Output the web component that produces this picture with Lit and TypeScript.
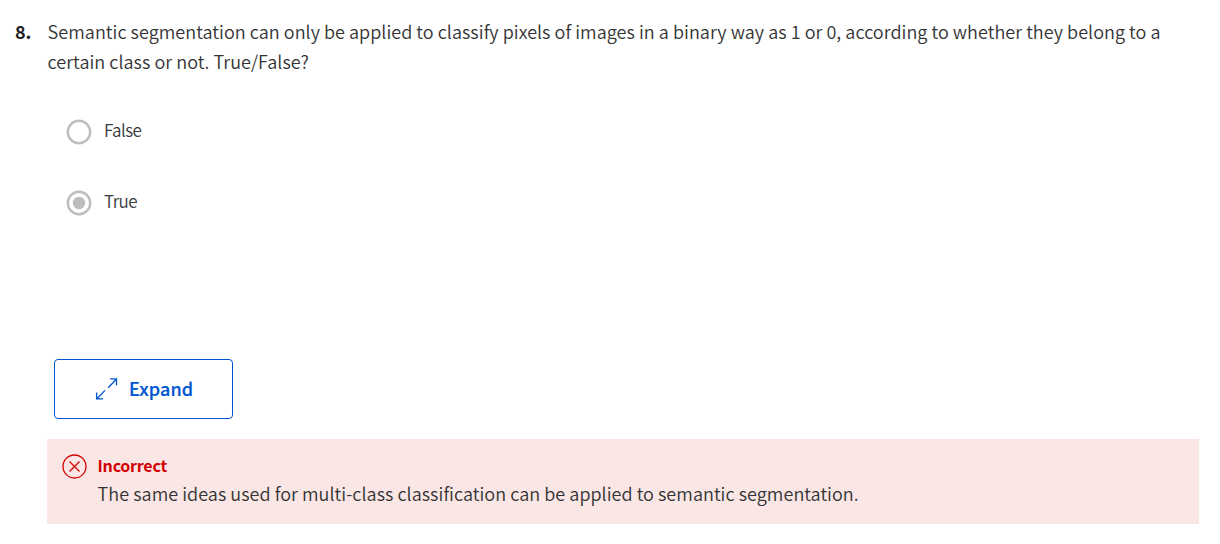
import { LitElement, html, css, svg } from "lit";
import { customElement, property } from "lit/decorators.js";

@customElement("quiz-option")
export class QuizOption extends LitElement {
  @property() label = "";
  @property({ type: Boolean }) checked = false;

  static styles = css`
    :host { display: flex; align-items: center; height: 26px; }
    .radio { display: block; width: 26px; height: 26px; margin-right: 12px; flex: none; }
    .label { font-size: 17px; line-height: 26px; letter-spacing: -0.55px; color: #373a3c; white-space: nowrap; margin-top: -4px; font-weight: 350; }
  `;

  render() {
    return html`
      <svg class="radio" viewBox="0 0 26 26" fill="none">
        <circle cx="13" cy="13" r="11.2" stroke="#bdbdbd" stroke-width="2.4" />
        ${this.checked ? svg`<circle cx="13" cy="13" r="6.2" fill="#bdbdbd" />` : null}
      </svg>
      <span class="label">${this.label}</span>
    `;
  }
}

@customElement("app-root")
export class AppRoot extends LitElement {
  static styles = css`
    :host {
      display: block;
      box-sizing: border-box;
      height: 544px;
      padding: 16px 21px 0 15px;
      background: #fff;
      color: #1f1f1f;
      font-family: "Noto Sans CJK SC", "Open Sans", sans-serif;
      font-size: 18px;
      font-weight: 350;
    }
    .question { display: flex; line-height: 30px; }
    .number { width: 32.6px; flex: none; font-weight: 700; }
    .prompt { white-space: nowrap; color: #333; letter-spacing: 0.04px; font-variant-ligatures: none; }
    .options { display: flex; flex-direction: column; gap: 45px; padding: 43px 0 0 51px; }
    .expand {
      display: flex;
      align-items: center;
      box-sizing: border-box;
      width: 179px;
      height: 60px;
      margin: 143px 0 0 39px;
      padding: 0 0 0 40px;
      border: 1px solid #0056d2;
      border-radius: 4px;
      background: #fff;
      color: #0056d2;
      font: inherit;
      font-weight: 500;
      line-height: 30px;
      letter-spacing: 0.1px;
      -webkit-text-stroke: 0.2px #0056d2;
    }
    .caption { margin-top: -2px; }
    .arrows { display: block; width: 24px; height: 24px; margin-right: 10px; flex: none; }
    .feedback {
      display: flex;
      box-sizing: border-box;
      height: 85px;
      margin: 20px 0 0 32px;
      padding: 12px 15px 0;
      background: #fae6e5;
    }
    .cross { display: block; width: 25px; height: 25px; margin: 3px 10.6px 0 0; flex: none; }
    .verdict { font-size: 16px; line-height: 28px; font-weight: 700; color: #d30001; letter-spacing: -0.25px; }
    .reason { line-height: 28px; white-space: nowrap; color: #333; letter-spacing: 0.04px; font-variant-ligatures: none; }
  `;

  render() {
    return html`
      <div class="question">
        <div class="number">8.</div>
        <div class="prompt">
          <span>Semantic segmentation can only be applied to classify pixels of images in a binary way as 1 or 0, according to whether they belong to a</span><br />
          <span>certain class or not. True/False?</span>
        </div>
      </div>
      <div class="options">
        <quiz-option label="False"></quiz-option>
        <quiz-option label="True" checked></quiz-option>
      </div>
      <button class="expand">
        <svg class="arrows" viewBox="0 0 24 24" fill="none" stroke="#0056d2" stroke-width="1.3">
          <path d="M13.2 10.7L21.3 2.2M15.2 1.9H21.5V8.3M10 13.4L1.9 21.7M1.6 15.4V21.9H8.1" />
        </svg>
        <span class="caption">Expand</span>
      </button>
      <div class="feedback">
        <svg class="cross" viewBox="0 0 25 25" fill="none" stroke="#d30001" stroke-width="1.3">
          <circle cx="12.5" cy="12.5" r="11.5" />
          <path d="M7.5 7.5L17.5 17.5M17.5 7.5L7.5 17.5" />
        </svg>
        <div>
          <div class="verdict">Incorrect</div>
          <div class="reason">The same ideas used for multi-class classification can be applied to semantic segmentation.</div>
        </div>
      </div>
    `;
  }
}
